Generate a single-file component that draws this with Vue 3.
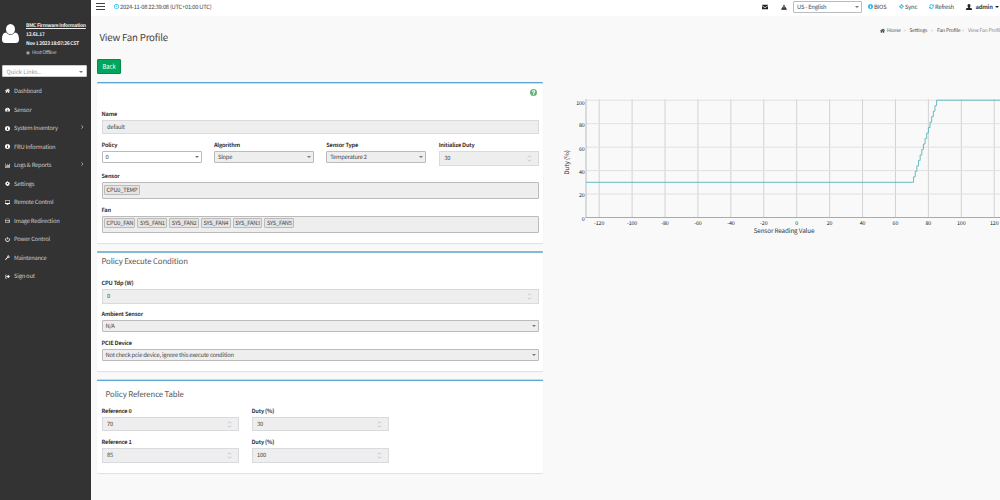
<script setup>
import { ref } from 'vue'

const menu = [
  { icon: 'home', text: 'Dashboard' },
  { icon: 'gauge', text: 'Sensor' },
  { icon: 'info', text: 'System Inventory', sub: true },
  { icon: 'info', text: 'FRU Information' },
  { icon: 'bars', text: 'Logs & Reports', sub: true },
  { icon: 'cog', text: 'Settings' },
  { icon: 'desktop', text: 'Remote Control' },
  { icon: 'drive', text: 'Image Redirection' },
  { icon: 'power', text: 'Power Control' },
  { icon: 'wrench', text: 'Maintenance' },
  { icon: 'signout', text: 'Sign out' }
]

// 16x16 glyphs, filled with evenodd
const icons = {
  home: 'M8 2L0 9l1 1.2L8 4.4l7 5.8L16 9l-2.6-2.3V2.6h-2.2v2.1zM8 5.6L2.4 10.2V15h4.3v-4h2.6v4h4.3v-4.8z',
  gauge: 'M8 2a8 8 0 0 0-6.9 12h13.8A8 8 0 0 0 8 2zM3 9a1 1 0 1 0 0 2 1 1 0 0 0 0-2zM4.5 5.5a1 1 0 1 0 0 2 1 1 0 0 0 0-2zM8 4a1 1 0 1 0 0 2 1 1 0 0 0 0-2zM13 9a1 1 0 1 0 0 2 1 1 0 0 0 0-2zM9.5 6L8 10a1.7 1.7 0 1 0 1 .3l1.5-4z',
  info: 'M8 0a8 8 0 1 0 0 16A8 8 0 0 0 8 0zM6.8 2.500h2.600v2H6.800zM6 6.500h3.500v4.800h1V13H5.800v-1.700h1V8H6z',
  bars: 'M0 1h1.300v12.700H17V15H0zM3 8h2v5H3zM6.300 4h2v9h-2zM9.600 6h2v7h-2zM13 2.500h2V13h-2z',
  cog: 'M6.900 1h2.200l.4 2 1.400.6 1.700-1.100 1.600 1.600-1.100 1.700.5 1.300 2 .4v2.200l-2 .4-.6 1.400 1.100 1.700-1.600 1.600-1.700-1.100-1.300.5-.4 2H6.900l-.4-2-1.400-.6-1.700 1.100-1.600-1.600 1.100-1.700-.5-1.300-2-.4V7.500l2-.4.6-1.400-1.100-1.700 1.600-1.600 1.700 1.100 1.300-.5zM8 5.800a2.400 2.400 0 1 0 0 4.800 2.400 2.400 0 0 0 0-4.800z',
  desktop: 'M0 1h16v11.500h-6V14h2v1.200H4V14h2v-1.500H0zM1.300 2.300v7.500h13.400V2.300z',
  drive: 'M3.500 2h9L16 9v5.500H0V9zM4.300 3.400L2 8.200h12l-2.300-4.800zM1.400 9.600V13h13.200V9.600zM9 10.600h1.500v1.500H9zM11.800 10.600h1.500v1.500h-1.500z',
  power: 'M7 0h2v8H7zM4.500 2.200l1.200 1.600a4.800 4.800 0 1 0 4.600 0l1.200-1.600a7 7 0 1 1-7 0z',
  wrench: 'M15.600 4.200l-3 1.700-1.800-1V2.800l3-1.700a4.500 4.500 0 0 0-6 5.600L.8 13.500a1.400 1.400 0 0 0 2 2l6.700-6.800a4.500 4.500 0 0 0 6.100-4.500z',
  signout: 'M6 2H3a3 3 0 0 0-3 3v6a3 3 0 0 0 3 3h3v-1.500H3.300A1.700 1.700 0 0 1 1.500 11V5a1.700 1.700 0 0 1 1.800-1.500H6zM9.500 2.500L16 8l-6.500 5.500v-3.200H4.500V5.700h5z',
  clock: 'M8 0a8 8 0 1 0 0 16A8 8 0 0 0 8 0zM8 2a6 6 0 1 1 0 12A6 6 0 0 1 8 2zM7.400 4H9v5.300H5V7.900h2.400z',
  mail: 'M0 2h16v1.500L8 9.500 0 3.500zM0 5.300l8 6 8-6V14H0z',
  warning: 'M8 1l8 14H0zM7 5.500l.3 5h1.400l.3-5zM7 11.700v1.800h2v-1.800z',
  sync: 'M8 0l2.500 2.500A6 6 0 0 1 14 6l2 2-4 4-3-3h2.500A3.800 3.800 0 0 0 8 4.500V7L4.500 3.500zM0 8l4-4 3 3H4.500A3.800 3.800 0 0 0 8 11.500V9l3.500 3.500L8 16l-2.500-2.500A6 6 0 0 1 2 10z',
  refresh: 'M1 7a7 7 0 0 1 12-4.200L15.500.5V7H9l2.300-2.400A4.800 4.800 0 0 0 3.400 7zM15 9a7 7 0 0 1-12 4.200L.5 15.500V9H7l-2.300 2.400A4.800 4.800 0 0 0 12.600 9z',
  user: 'M8 0c2.700 0 4 1.900 4 4.300 0 1.900-.8 3.500-1.800 4.400v1l4.500 1.800c1 .4 1.300 1.300 1.300 4.500H0c0-3.200.3-4.100 1.300-4.500l4.500-1.800v-1C4.800 7.800 4 6.200 4 4.300 4 1.900 5.300 0 8 0z',
  person: 'M8 0a4.200 4.200 0 0 1 4.200 4.300A4.200 4.200 0 0 1 8 8.700a4.200 4.200 0 0 1-4.200-4.400A4.200 4.200 0 0 1 8 0zM3.900 7.200A5.600 5.600 0 0 0 8 9.300a5.600 5.600 0 0 0 4.100-2.100C14.800 7.200 16 9.500 16 13c0 2-1.200 3-3 3H3c-1.800 0-3-1-3-3 0-3.500 1.200-5.800 3.900-5.800z',
  help: 'M8 0a8 8 0 1 0 0 16A8 8 0 0 0 8 0zM4.500 6C4.600 4 6 3 8 3c2.200 0 3.700 1.200 3.700 3 0 1.500-.8 2.100-1.600 2.700-.7.400-.8.700-.8 1.300H6.900c0-1.500.4-2.100 1.300-2.700.7-.4 1-.7 1-1.200s-.4-.9-1.200-.9-1.100.4-1.200 1.200zM6.900 11h2.400v2.200H6.900z',
  target: 'M8 1a7 7 0 1 0 0 14A7 7 0 0 0 8 1zM8 2.500a5.500 5.500 0 1 1 0 11 5.500 5.500 0 0 1 0-11zM8 4a4 4 0 1 0 0 8 4 4 0 0 0 0-8z'
}

const fans = ['CPU0_FAN', 'SYS_FAN1', 'SYS_FAN2', 'SYS_FAN4', 'SYS_FAN3', 'SYS_FAN5']
const references = ref([
  { value: 70, duty: 30 },
  { value: 85, duty: 100 }
])

const xTicks = [-120, -100, -80, -60, -40, -20, 0, 20, 40, 60, 80, 100, 120]
const yTicks = [0, 20, 40, 60, 80, 100]

function px(v) {
  return 241.7 + v * 1.646
}

function py(v) {
  return 127.5 - v * 1.173
}

// duty goes up one step for every degree between the two references
function dutyLine() {
  const [a, b] = references.value
  let d = `M${px(-128)} ${py(a.duty)}`
  for (let v = a.value + 1; v <= b.value; v++) {
    const duty = a.duty + (v - a.value) * (b.duty - a.duty) / (b.value - a.value)
    d += `H${px(v)}V${py(duty)}`
  }
  return d + 'H445'
}
</script>

<template>
  <div class="wrapper">
    <aside class="sidebar">
      <div class="user-panel">
        <svg class="avatar" viewBox="0 0 16 16" preserveAspectRatio="none"><path :d="icons.person" /></svg>
        <div class="fw">
          <a class="fw-link">BMC Firmware Information</a>
          <b>12.61.17</b>
          <b>Nov 1 2023 18:07:26 CST</b>
          <span class="host"><svg viewBox="0 0 16 16"><path :d="icons.target" /></svg>Host Offline</span>
        </div>
      </div>
      <div class="quick">Quick Links..<i class="caret"></i></div>
      <nav>
        <a v-for="item in menu" :key="item.text" class="nav-item">
          <svg viewBox="0 0 16 16"><path :d="icons[item.icon]" /></svg>
          <span>{{ item.text }}</span>
          <svg v-if="item.sub" class="angle" viewBox="0 0 6 10"><path d="M1 1l4 4-4 4" /></svg>
        </a>
      </nav>
    </aside>

    <div class="page">
      <header class="topbar">
        <div class="burger"><i></i><i></i><i></i></div>
        <svg class="blue clock" viewBox="0 0 16 16"><path :d="icons.clock" /></svg>
        <span class="time">2024-11-08 22:39:08 (UTC+01:00 UTC)</span>
        <svg class="mail" viewBox="0 0 16 16"><path :d="icons.mail" /></svg>
        <svg class="warn" viewBox="0 0 16 16"><path :d="icons.warning" /></svg>
        <div class="lang">US - English<i class="caret"></i></div>
        <div class="action bios"><svg class="blue" viewBox="0 0 16 16"><path :d="icons.info" /></svg>BIOS</div>
        <div class="action sync"><svg class="blue" viewBox="0 0 16 16"><path :d="icons.sync" /></svg>Sync</div>
        <div class="action refresh"><svg class="blue" viewBox="0 0 16 16"><path :d="icons.refresh" /></svg>Refresh</div>
        <div class="action admin"><svg viewBox="0 0 16 16"><path :d="icons.user" /></svg><b>admin</b><i class="caret"></i></div>
      </header>

      <div class="heading">
        <h1>View Fan Profile</h1>
        <div class="crumbs">
          <svg viewBox="0 0 16 16"><path :d="icons.home" /></svg>
          <span class="c-home">Home</span><em>&gt;</em>
          <span class="c-set">Settings</span><em>&gt;</em>
          <span class="c-fan">Fan Profile</span><em>&gt;</em>
          <span class="current">View Fan Profile</span>
        </div>
      </div>

      <button class="back">Back</button>

      <div class="content">
        <div class="left">
          <section class="card profile">
            <div class="help"><svg viewBox="0 0 16 16"><path :d="icons.help" /></svg></div>
            <label>Name</label>
            <div class="input">default</div>
            <div class="cols">
              <div>
                <label>Policy</label>
                <div class="select enabled">0<i class="caret"></i></div>
              </div>
              <div>
                <label>Algorithm</label>
                <div class="select">Slope<i class="caret"></i></div>
              </div>
              <div>
                <label>Sensor Type</label>
                <div class="select">Temperature 2<i class="caret"></i></div>
              </div>
              <div>
                <label>Initialize Duty</label>
                <div class="input">30<svg class="spin" viewBox="0 0 6 9"><path d="M1 3l2-2 2 2M1 6l2 2 2-2" /></svg></div>
              </div>
            </div>
            <label class="l-sensor">Sensor</label>
            <div class="tags"><span>CPU0_TEMP</span></div>
            <label class="l-fan">Fan</label>
            <div class="tags"><span v-for="fan in fans" :key="fan">{{ fan }}</span></div>
          </section>

          <section class="card condition">
            <h2>Policy Execute Condition</h2>
            <label>CPU Tdp (W)</label>
            <div class="input">0<svg class="spin" viewBox="0 0 6 9"><path d="M1 3l2-2 2 2M1 6l2 2 2-2" /></svg></div>
            <label class="l-ambient">Ambient Sensor</label>
            <div class="select">N/A<i class="caret"></i></div>
            <label class="l-pcie">PCIE Device</label>
            <div class="select">Not check pcie device, ignore this execute condition<i class="caret"></i></div>
          </section>

          <section class="card table">
            <h2>Policy Reference Table</h2>
            <div v-for="(item, i) in references" :key="i" class="ref-row">
              <div>
                <label>Reference {{ i }}</label>
                <div class="input">{{ item.value }}<svg class="spin" viewBox="0 0 6 9"><path d="M1 3l2-2 2 2M1 6l2 2 2-2" /></svg></div>
              </div>
              <div>
                <label>Duty (%)</label>
                <div class="input">{{ item.duty }}<svg class="spin" viewBox="0 0 6 9"><path d="M1 3l2-2 2 2M1 6l2 2 2-2" /></svg></div>
              </div>
            </div>
          </section>
        </div>

        <svg class="chart" width="445" height="150" viewBox="0 0 445 150">
          <line v-for="x in xTicks" :key="'x' + x" class="grid-x" :x1="px(x)" :x2="px(x)" y1="9" y2="127.5" />
          <line v-for="y in yTicks" :key="'y' + y" class="grid-y" x1="31" x2="445" :y1="py(y)" :y2="py(y)" />
          <line class="axis-y" x1="31" x2="31" y1="9" y2="128" />
          <line class="axis-x" x1="30.5" x2="445" y1="127.5" y2="127.5" />
          <path class="duty-line" :d="dutyLine()" />
          <text v-for="x in xTicks" :key="'tx' + x" class="tick" text-anchor="middle" :x="px(x)" y="135.2">{{ x }}</text>
          <text v-for="y in yTicks" :key="'ty' + y" class="tick" text-anchor="end" x="29.7" :y="py(y) + (y === 100 ? 4.6 : 3.4)">{{ y }}</text>
          <text class="axis-title" text-anchor="middle" x="229" y="143.3">Sensor Reading Value</text>
          <text class="axis-title" text-anchor="middle" transform="translate(14.3 72.5) rotate(-90)">Duty (%)</text>
        </svg>
      </div>
    </div>
  </div>
</template>

<style>
body {
  overflow: hidden;
  background: #f9f9f9;
}
</style>

<style scoped>
* {
  box-sizing: border-box;
}
.wrapper {
  display: flex;
  width: 1000px;
  height: 500px;
  overflow: hidden;
  font-family: "Noto Sans CJK SC", "Noto Sans", sans-serif;
  font-size: 5.8px;
  letter-spacing: -0.21px;
  line-height: 8px;
  color: #444;
  text-rendering: geometricPrecision;
  white-space: nowrap;
}
svg {
  flex: none;
  fill: currentColor;
  fill-rule: evenodd;
}
.caret {
  flex: none;
  margin-left: auto;
  border: 2px solid transparent;
  border-top: 2.5px solid #777;
  border-bottom: 0;
}

.sidebar {
  flex: none;
  width: 91px;
  background: #333;
  color: #ccc;
}
.user-panel {
  display: flex;
  height: 65px;
  padding: 21px 0 0 2px;
  color: #eee;
}
.avatar {
  width: 17px;
  height: 19px;
  margin: 3px 7px 0 0;
  color: #fff;
}
.fw {
  display: flex;
  flex-direction: column;
  font-size: 5px;
  letter-spacing: -0.28px;
  line-height: 9px;
}
.fw-link {
  font-weight: bold;
  text-decoration: underline;
}
.host {
  display: flex;
  align-items: center;
  color: #ccc;
}
.host svg {
  width: 4px;
  height: 4px;
  margin-right: 2px;
}
.quick {
  display: flex;
  align-items: center;
  width: 85px;
  height: 12px;
  margin-left: 2px;
  padding: 1px 3px 0 3.5px;
  border: 1px solid #ccc;
  border-radius: 1px;
  background: #fff;
  color: #999;
  font-size: 5.8px;
  letter-spacing: 0;
}
nav {
  padding-top: 4.7px;
}
.nav-item {
  display: flex;
  align-items: center;
  height: 18.55px;
  padding: 0 7.5px 0 5px;
}
.nav-item svg {
  width: 5px;
  height: 5px;
  margin-right: 4px;
  color: #fff;
}
.nav-item .angle {
  width: 2.5px;
  height: 4px;
  margin: -3px 0 0 auto;
  fill: none;
  stroke: #ccc;
  stroke-width: 1.8;
}

.page {
  flex: 1;
  min-width: 0;
  overflow: hidden;
  background: #f9f9f9;
}
.topbar {
  display: flex;
  align-items: center;
  height: 16px;
  padding: 0 0 3px 5px;
  background: #fff;
}
.burger {
  width: 18px;
}
.burger i {
  display: block;
  width: 9px;
  height: 1px;
  margin: 2px 0;
  background: #444;
}
.blue {
  color: #1fbdf0;
}
.clock {
  width: 5px;
  height: 5px;
  margin-right: 1px;
}
.time {
  width: 642px;
  letter-spacing: -0.25px;
}
.mail {
  width: 6px;
  height: 6px;
  color: #222;
}
.warn {
  width: 6px;
  height: 6px;
  margin-left: 13px;
  color: #222;
}
.lang {
  display: flex;
  align-items: center;
  width: 69px;
  height: 12px;
  margin-left: 6px;
  padding: 0 2px 0 3px;
  border: 1px solid #bbb;
  border-radius: 1px;
}
.action {
  display: flex;
  align-items: center;
}
.action svg {
  width: 5px;
  height: 5px;
  margin-right: 1px;
}
.bios {
  width: 31px;
  margin-left: 6px;
}
.sync {
  width: 30px;
}
.refresh {
  width: 37px;
}
.admin svg {
  width: 6px;
  height: 6px;
  margin-right: 3.5px;
  color: #222;
}
.admin .caret {
  margin-left: 2px;
  border-top-color: #222;
}

.heading {
  display: flex;
  justify-content: space-between;
  height: 43px;
  padding: 8px 0 0 8.5px;
}
h1 {
  margin: 6px 0 0;
  font-size: 9.7px;
  font-weight: normal;
  line-height: 15px;
}
.crumbs {
  display: flex;
  align-items: center;
  width: 120px;
  height: 13px;
  font-size: 5px;
  letter-spacing: -0.14px;
}
.crumbs > * {
  flex: none;
}
.crumbs svg {
  width: 5px;
  height: 5px;
  margin-right: 2px;
}
.crumbs em {
  width: 6px;
  color: #bbb;
  font-size: 4px;
  font-style: normal;
}
.c-home {
  width: 16.5px;
}
.c-set {
  width: 21.5px;
}
.c-fan {
  width: 25px;
}
.current {
  color: #888;
}
.back {
  display: block;
  width: 24px;
  height: 15px;
  margin-left: 6px;
  padding: 0;
  border: 1px solid #008d4c;
  border-radius: 1px;
  background: #00a65a;
  color: #fff;
  font: inherit;
}

.content {
  display: flex;
  padding: 8px 0 0 6px;
}
.left {
  flex: none;
  width: 446px;
}
.card {
  padding: 0 4px 0 4.5px;
  border-top: 2px solid #85b9d6;
  border-radius: 1px;
  background: #fff;
  box-shadow: 0 1px 1px rgba(0, 0, 0, 0.1);
}
.profile {
  height: 161px;
  padding-top: 1px;
  border-top: 1px solid #5ba5d0;
  box-shadow: 0 1px 1px rgba(0, 0, 0, 0.1), inset 0 1px 0 #c8dfed;
}
.condition {
  height: 120px;
  margin-top: 8px;
}
.table {
  height: 94px;
  margin-top: 8px;
  padding-top: 1px;
  border-top: 1px solid #c8dce6;
  box-shadow: 0 1px 1px rgba(0, 0, 0, 0.1), inset 0 1px 0 #5ba9d6;
}
.help {
  display: flex;
  justify-content: flex-end;
  height: 25.5px;
  padding: 4.5px 2px 0 0;
  color: #6cb07a;
}
.help svg {
  width: 7px;
  height: 7px;
}
label {
  display: block;
  height: 8px;
  margin-bottom: 2px;
  color: #333;
  font-size: 5.6px;
  font-weight: bold;
  letter-spacing: -0.17px;
}
.input,
.select {
  display: flex;
  align-items: center;
  height: 14.5px;
  padding: 0 5px 0 4.5px;
  border: 1px solid #d8dadd;
  background: #eee;
  color: #444;
}
.select {
  height: 12px;
  padding: 0 2px 0 3px;
  border-color: #bbb;
  border-radius: 1px;
}
.enabled {
  background: #fff;
}
.spin {
  width: 5px;
  height: 7px;
  margin: 0 1px 0 auto;
  fill: none;
  stroke: #bbb;
}
.cols {
  display: grid;
  grid-template-columns: repeat(4, 100px);
  gap: 12.4px;
  height: 31px;
  padding-top: 7px;
}
.l-sensor {
  margin-top: 7px;
}
.l-fan {
  margin-top: 7px;
  margin-bottom: 1.5px;
}
.tags {
  display: flex;
  gap: 2px;
  height: 17px;
  padding: 1.5px;
  border: 1px solid #bbb;
  border-radius: 1px;
  background: #eee;
}
.tags span {
  height: 10px;
  padding: 0 1.4px 0 1.6px;
  border: 1px solid #bbb;
  border-radius: 1px;
  background: #e4e4e4;
  font-size: 5.7px;
}
h2 {
  margin: 0;
  color: #555;
  font-size: 7.8px;
  font-weight: normal;
  letter-spacing: -0.14px;
  line-height: 12px;
}
.condition h2 {
  height: 26px;
  padding-top: 3px;
}
.l-ambient {
  margin-top: 6.5px;
}
.l-pcie {
  margin-top: 7px;
}
.table h2 {
  height: 25.9px;
  padding: 7.5px 0 0 4px;
}
.ref-row {
  display: grid;
  grid-template-columns: repeat(2, 137px);
  gap: 13px;
  height: 31.2px;
}
.chart {
  margin: 8px 0 0 12px;
}
.grid-x {
  stroke: #d2d2d2;
}
.grid-y {
  stroke: #e0e0e0;
}
.axis-y {
  stroke: #bbb;
}
.axis-x {
  stroke: #aaa;
}
.duty-line {
  fill: none;
  stroke: #66bcbc;
}
.tick {
  font-size: 5.3px;
  letter-spacing: -0.1px;
  fill: #222;
}
.axis-title {
  font-size: 6.3px;
  letter-spacing: -0.12px;
  fill: #333;
}
</style>
